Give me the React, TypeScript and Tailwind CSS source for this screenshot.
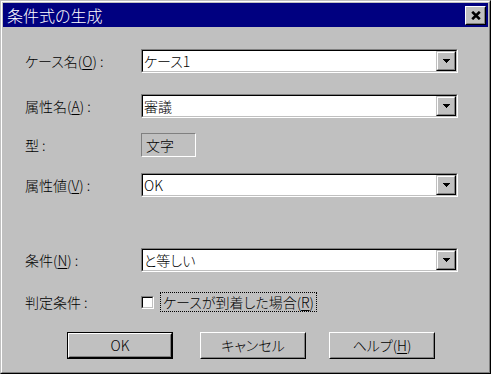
import React from "react";

const font = "[font-family:'Noto_Sans_CJK_JP','Noto_Sans',sans-serif] [font-feature-settings:'palt']";

function Acc({ c }: { c: string }) {
  return <span className="underline underline-offset-[2px]">{c}</span>;
}

function Label({ children }: { children: React.ReactNode }) {
  return <div className="w-[116px] shrink-0 text-[14px] leading-none text-black">{children}</div>;
}

function DropButton() {
  return (
    <div className="flex h-full w-[20px] border border-t-[#c0c0c0] border-l-[#c0c0c0] border-r-black border-b-black">
      <div className="flex flex-1 items-center justify-center border border-t-white border-l-white border-r-[#808080] border-b-[#808080] bg-[#c0c0c0]">
        <svg width="7" height="4" viewBox="0 0 7 4" shapeRendering="crispEdges">
          <polygon points="0,0 7,0 3.5,4" fill="black" />
        </svg>
      </div>
    </div>
  );
}

function Combo({ value }: { value: string }) {
  return (
    <div className="flex h-[24px] w-[317px] border border-t-[#808080] border-l-[#808080] border-r-white border-b-white">
      <div className="flex flex-1 items-stretch border border-t-black border-l-black border-r-[#c0c0c0] border-b-[#c0c0c0] bg-white">
        <div className="flex flex-1 items-center pl-[1px] text-[14px] text-black">{value}</div>
        <DropButton />
      </div>
    </div>
  );
}

function Button({ children, def, className }: { children: React.ReactNode; def?: boolean; className?: string }) {
  const inner = (
    <div className="flex flex-1 border border-t-white border-l-white border-r-black border-b-black">
      <div className="flex flex-1 items-center justify-center border border-t-[#c0c0c0] border-l-[#c0c0c0] border-r-[#808080] border-b-[#808080] text-[14px] text-black">
        {children}
      </div>
    </div>
  );
  return (
    <div className={`flex h-[27px] w-[106px] ${def ? "border border-black" : ""} ${className ?? ""}`}>
      {inner}
    </div>
  );
}

export default function App() {
  return (
    <div className={`${font} font-light h-[374px] w-[491px] border border-t-[#c0c0c0] border-l-[#c0c0c0] border-r-black border-b-black bg-[#c0c0c0]`}>
      <div className="flex h-full flex-col border border-t-white border-l-white border-r-[#808080] border-b-[#808080] p-[1px]">
        <div className="flex h-[24px] shrink-0 items-center justify-between bg-[#000080] pl-[4px] pr-[2px]">
          <span className="text-[16px] leading-none text-white">条件式の生成</span>
          <div className="flex h-[19px] w-[21px] border border-t-white border-l-white border-r-black border-b-black">
            <div className="flex flex-1 items-center justify-center border border-t-[#c0c0c0] border-l-[#c0c0c0] border-r-[#808080] border-b-[#808080] bg-[#c0c0c0]">
              <svg width="10" height="9" viewBox="0 0 10 9">
                <path d="M1.2 0.8 L8.8 8.2 M8.8 0.8 L1.2 8.2" stroke="black" strokeWidth="2.6" />
              </svg>
            </div>
          </div>
        </div>

        <div className="flex flex-1 flex-col pl-[22px] pt-[22px]">
          <div className="flex h-[24px] items-center">
            <Label>
              ケース名(<Acc c="O" />) :
            </Label>
            <Combo value="ケース1" />
          </div>

          <div className="mt-[21px] flex h-[24px] items-center">
            <Label>
              属性名(<Acc c="A" />) :
            </Label>
            <Combo value="審議" />
          </div>

          <div className="mt-[15px] flex h-[24px] items-center">
            <Label>型 :</Label>
            <div className="flex h-[24px] w-[55px] items-center border border-t-[#808080] border-l-[#808080] border-r-white border-b-white pl-[4px] text-[14px] text-black">
              文字
            </div>
          </div>

          <div className="mt-[16px] flex h-[24px] items-center">
            <Label>
              属性値(<Acc c="V" />) :
            </Label>
            <Combo value="OK" />
          </div>

          <div className="mt-[51px] flex h-[24px] items-center">
            <Label>
              条件(<Acc c="N" />) :
            </Label>
            <Combo value="と等しい" />
          </div>

          <div className="mt-[20px] flex h-[20px] items-center">
            <Label>判定条件 :</Label>
            <div className="flex h-[13px] w-[13px] border border-t-[#808080] border-l-[#808080] border-r-white border-b-white">
              <div className="flex-1 border border-t-black border-l-black border-r-[#c0c0c0] border-b-[#c0c0c0] bg-white" />
            </div>
            <div className="ml-[6px] flex h-[20px] items-center border border-dotted border-black px-[2px] text-[14px] text-black">
              ケースが到着した場合(<Acc c="R" />)
            </div>
          </div>

          <div className="mt-[20px] flex">
            <Button def className="ml-[42px]">
              OK
            </Button>
            <Button className="ml-[27px]">キャンセル</Button>
            <Button className="ml-[23px]">
              ヘルプ(<Acc c="H" />)
            </Button>
          </div>
        </div>
      </div>
    </div>
  );
}
